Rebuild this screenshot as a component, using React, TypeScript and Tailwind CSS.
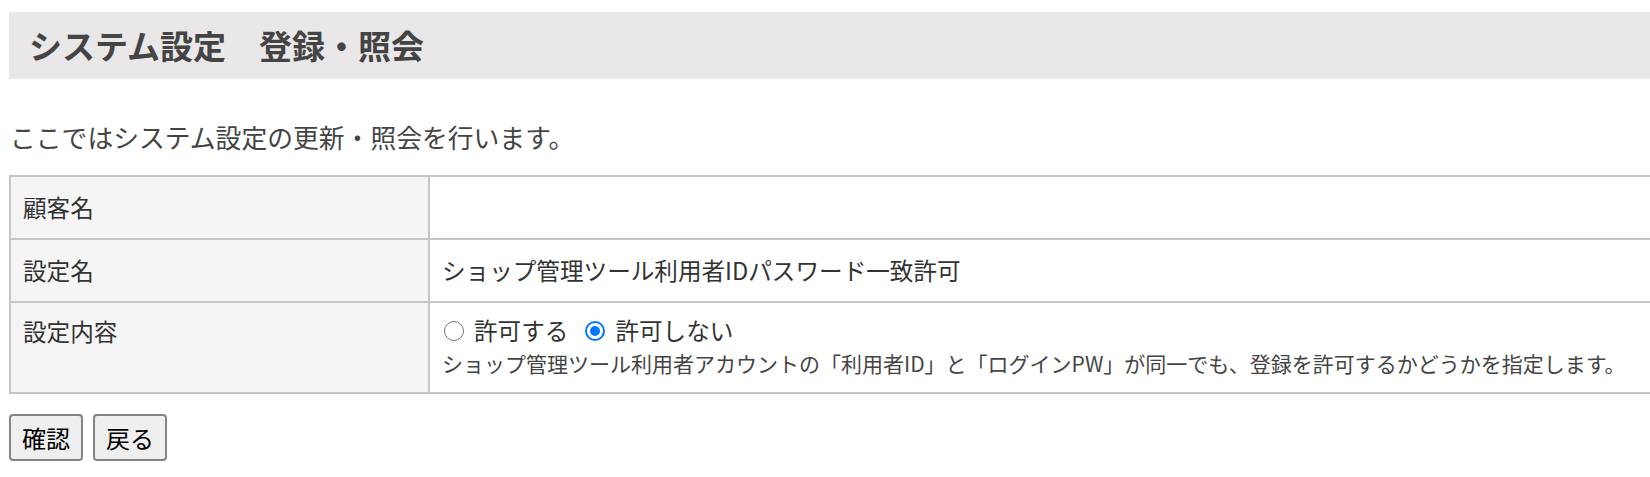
import { useState } from 'react';

const font = { fontFamily: '"Noto Sans CJK JP", "Noto Sans", sans-serif' };

function Row({ label, children, top }: { label: string; children?: React.ReactNode; top?: boolean }) {
  return (
    <tr className="border-y-2 border-[#c6c6c6]">
      <th
        className={`w-[419px] border-x-2 border-[#c6c6c6] bg-[#f5f5f5] px-3 text-left font-normal text-[#333] ${
          top ? 'align-top pt-[10px]' : 'py-3'
        }`}
      >
        <span className="leading-[37px]">{label}</span>
      </th>
      <td className={`border-x-2 border-[#c6c6c6] px-3 text-[#333] ${top ? 'align-top pt-[10px] pb-[15px]' : 'py-3'}`}>
        {children}
      </td>
    </tr>
  );
}

// hand-drawn Chrome-style radio, the real input is kept for behaviour only
function Radio({ checked, onChange }: { checked: boolean; onChange: () => void }) {
  return (
    <span className="relative inline-flex h-[20px] w-[20px] shrink-0">
      <input
        type="radio"
        name="allow"
        checked={checked}
        onChange={onChange}
        className="absolute inset-0 m-0 opacity-0"
      />
      {checked ? (
        <span className="flex h-[20px] w-[20px] items-center justify-center rounded-full border-2 border-[#0075ff] bg-white">
          <span className="h-[10px] w-[10px] rounded-full bg-[#0075ff]" />
        </span>
      ) : (
        <span className="h-[20px] w-[20px] rounded-full border-[1.5px] border-[#767676] bg-white" />
      )}
    </span>
  );
}

export default function App() {
  const [allow, setAllow] = useState(false);

  return (
    <div className="min-h-screen w-full overflow-hidden bg-white pt-3 pl-[9px]" style={font}>
      <div className="w-[1660px] bg-[#e9e7e8] py-[14px] pl-5">
        <h1 className="text-[33px] font-bold leading-[39px] text-[#444]">システム設定　登録・照会</h1>
      </div>

      <p className="mt-10 ml-[1px] text-[25.8px] leading-9 text-[#444]">ここではシステム設定の更新・照会を行います。</p>

      <table className="mt-5 w-[1660px] border-collapse text-[23.6px]">
        <tbody>
          <Row label="顧客名">
            <span className="leading-[37px]">&nbsp;</span>
          </Row>
          <Row label="設定名">
            <span className="leading-[37px]">ショップ管理ツール利用者IDパスワード一致許可</span>
          </Row>
          <Row label="設定内容" top>
            <div className="flex h-9 items-center">
              <label className="ml-[2px] flex items-center gap-[10px]">
                <Radio checked={allow} onChange={() => setAllow(true)} />
                許可する
              </label>
              <label className="ml-[17px] flex items-center gap-[10px]">
                <Radio checked={!allow} onChange={() => setAllow(false)} />
                許可しない
              </label>
            </div>
            <p className="text-[21px] leading-7 text-[#444]">
              ショップ管理ツール利用者アカウントの「利用者ID」と「ログインPW」が同一でも、登録を許可するかどうかを指定します。
            </p>
          </Row>
        </tbody>
      </table>

      <div className="mt-5 flex gap-[10px]">
        <button className="h-[47px] rounded-[4px] border-2 border-[#858585] bg-[#efefef] px-[11px] text-[24px] text-black">
          確認
        </button>
        <button className="h-[47px] rounded-[4px] border-2 border-[#858585] bg-[#efefef] px-[11px] text-[24px] text-black">
          戻る
        </button>
      </div>
    </div>
  );
}
